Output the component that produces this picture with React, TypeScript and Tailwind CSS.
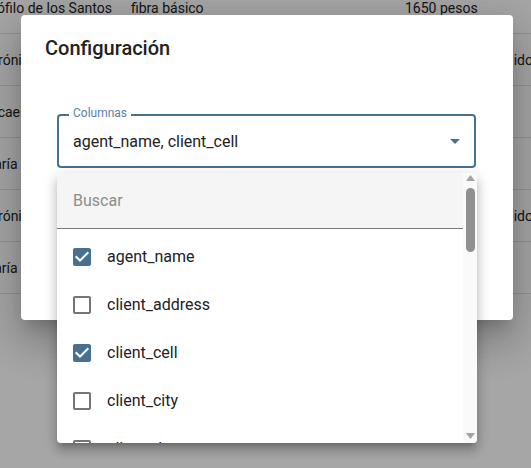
import React from 'react';

const rows = [
  { name: 'Teófilo de los Santos', plan: 'fibra básico', price: '1650 pesos', status: '' },
  { name: 'Verónica Ruiz', plan: 'fibra plus', price: '2100 pesos', status: 'Atendido' },
  { name: 'Micaela Ortiz', plan: 'fibra básico', price: '1650 pesos', status: '' },
  { name: 'María Luna', plan: 'fibra plus', price: '2100 pesos', status: '' },
  { name: 'Verónica Vera', plan: 'fibra básico', price: '1650 pesos', status: 'Atendido' },
  { name: 'María Sol', plan: 'fibra plus', price: '2100 pesos', status: '' },
];

const options = [
  { label: 'agent_name', checked: true },
  { label: 'client_address', checked: false },
  { label: 'client_cell', checked: true },
  { label: 'client_city', checked: false },
  { label: 'client_document', checked: false },
];

function CheckIcon({ checked }: { checked: boolean }) {
  if (checked) {
    return (
      <svg width="24" height="24" viewBox="0 0 24 24" className="-m-[3px] shrink-0">
        <path fill="#ffffff" d="M5 5h14v14H5z" />
        <path
          fill="#48708f"
          d="M19 3H5c-1.11 0-2 .9-2 2v14c0 1.1.89 2 2 2h14c1.11 0 2-.9 2-2V5c0-1.1-.89-2-2-2zm-9 14l-5-5 1.41-1.41L10 14.17l7.59-7.59L19 8l-9 9z"
        />
      </svg>
    );
  }
  return (
    <svg width="24" height="24" viewBox="0 0 24 24" className="-m-[3px] shrink-0">
      <path
        fill="#757575"
        d="M19 5v14H5V5h14m0-2H5c-1.1 0-2 .9-2 2v14c0 1.1.9 2 2 2h14c1.1 0 2-.9 2-2V5c0-1.1-.9-2-2-2z"
      />
    </svg>
  );
}

export default function App() {
  return (
    <div className="relative h-[468px] w-[531px] overflow-hidden bg-white font-['Roboto',sans-serif]">
      {/* table behind the modal */}
      <div className="-ml-[18px] -mt-[18px] w-[620px]">
        {rows.map((r, i) => (
          <div key={i} className="flex h-[52px] items-center border-b border-[#e0e0e0] text-sm text-[#222]">
            <div className="w-[149px] whitespace-nowrap">{r.name}</div>
            <div className="w-[274px] whitespace-nowrap">{r.plan}</div>
            <div className="w-[72px] whitespace-nowrap">{r.price}</div>
            <div className="whitespace-nowrap">{r.status}</div>
          </div>
        ))}
      </div>

      {/* backdrop */}
      <div className="absolute inset-0 bg-black/[0.35]" />

      {/* dialog */}
      <div className="absolute left-[21px] top-[15px] h-[305px] w-[492px] rounded bg-white shadow-[0px_11px_15px_-7px_rgba(0,0,0,0.2),0px_24px_38px_3px_rgba(0,0,0,0.14),0px_9px_46px_8px_rgba(0,0,0,0.12)]">
        <h2 className="px-6 pt-[17px] text-xl font-medium leading-8 text-[#222]">Configuración</h2>

        <div className="relative ml-9 mt-[50px] flex h-[54px] w-[419px] items-center rounded border-2 border-[#48708f] pl-[14px] pr-2">
          <span className="absolute -top-[9px] left-[10px] bg-white px-1 text-xs leading-3 text-[#5b7f9f]">
            Columnas
          </span>
          <span className="flex-1 pt-[2px] text-base text-[#222]">agent_name, client_cell</span>
          <svg width="24" height="24" viewBox="0 0 24 24" className="mr-[-1px]">
            <path fill="#48708f" d="M7 10l5 5 5-5z" />
          </svg>
        </div>
      </div>

      {/* dropdown menu */}
      <div className="absolute left-[57px] top-[173px] flex h-[270px] w-[420px] overflow-hidden rounded bg-white shadow-[0px_5px_5px_-3px_rgba(0,0,0,0.2),0px_8px_10px_1px_rgba(0,0,0,0.14),0px_3px_14px_2px_rgba(0,0,0,0.12)]">
        <div className="flex-1">
          <div className="flex h-[56px] items-center rounded-t border-b border-[#7a7a7a] bg-[#f5f5f5] pl-4 text-base text-[#8c8c8c]">
            Buscar
          </div>
          <ul className="pt-[4px]">
            {options.map((o) => (
              <li key={o.label} className="flex h-12 items-center gap-4 pl-4 text-base text-[#222]">
                <CheckIcon checked={o.checked} />
                <span>{o.label}</span>
              </li>
            ))}
          </ul>
        </div>
        <div className="flex w-[14px] flex-col items-center bg-[#fafafa] pt-[1px]">
          <svg width="9" height="6" viewBox="0 0 9 6" className="mt-[1px]">
            <path fill="#a3a3a3" d="M0 6L4.5 0 9 6z" />
          </svg>
          <div className="mt-[7px] h-[64px] w-[9px] rounded-full bg-[#909090]" />
          <div className="flex-1" />
          <svg width="9" height="6" viewBox="0 0 9 6" className="mb-[4px]">
            <path fill="#a3a3a3" d="M0 0L4.5 6 9 0z" />
          </svg>
        </div>
      </div>
    </div>
  );
}
